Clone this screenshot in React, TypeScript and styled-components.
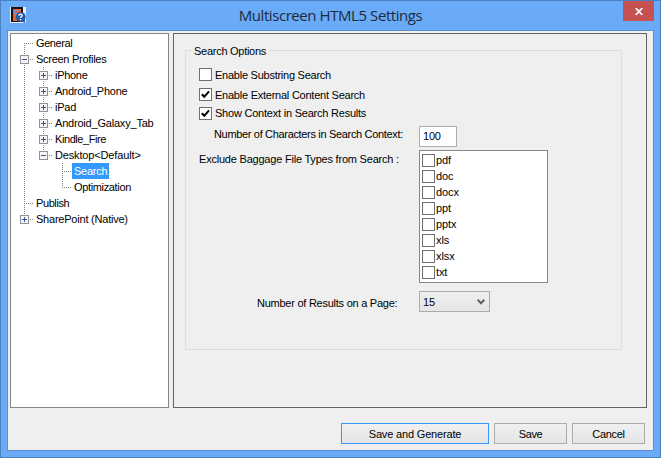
import React from "react";
import styled, { createGlobalStyle } from "styled-components";

const Global = createGlobalStyle`
  * { box-sizing: border-box; }
  html, body { margin: 0; padding: 0; overflow: hidden; }
  body, button, input { font-family: "Liberation Sans", Arial, sans-serif; font-size: 11px; color: #000; }
`;

const Window = styled.div`
  width: 661px;
  height: 458px;
  display: flex;
  flex-direction: column;
  padding: 0 6px 6px;
  background: #6aabf7;
  border: 1px solid #4c82bf;
`;

const TitleBar = styled.header`
  flex: 0 0 29px;
  display: grid;
  grid-template-columns: 31px 1fr 31px;
  align-items: start;
`;

const AppIcon = styled.svg`
  width: 16px;
  height: 16px;
  margin: 6px 0 0 3px;
`;

const Title = styled.h1`
  margin: 0;
  text-align: center;
  font: 400 15px/29px "Open Sans", sans-serif;
  color: #1c2a3c;
`;

const CloseButton = styled.button`
  display: flex;
  align-items: center;
  justify-content: center;
  width: 31px;
  height: 20px;
  padding: 1px 0 0 1px;
  border: 0;
  background: #c75050;
`;

const Client = styled.main`
  flex: 1;
  display: flex;
  flex-direction: column;
  padding: 2px 6px 6px 2px;
  background: #efefef;
  border: 1px solid #5a90cc;
`;

const Panes = styled.div`
  display: flex;
  gap: 4px;
  height: 375px;
`;

const Tree = styled.nav`
  width: 159px;
  padding: 1px 0;
  background: #fff;
  border: 1px solid #828790;
`;

const TreeRow = styled.div`
  display: flex;
  align-items: center;
  height: 16px;
`;

const Gutter = styled.svg`
  flex: none;
  display: block;
`;

const NodeName = styled.span<{ $selected?: boolean; $tracking: number }>`
  height: 16px;
  padding: 0 2px;
  line-height: 16px;
  white-space: nowrap;
  letter-spacing: ${(p) => p.$tracking}px;
  color: ${(p) => (p.$selected ? "#fff" : "#000")};
  background: ${(p) => (p.$selected ? "#3399ff" : "transparent")};
`;

const Panel = styled.section`
  flex: 1;
  padding: 10px 24px 0 11px;
  border: 1px solid #646464;
`;

const Group = styled.fieldset`
  margin: 0;
  padding: 0 0 0 13px;
  width: 437px;
  height: 306px;
  min-width: 0;
  border: 1px solid #dcdcdc;
`;

const Legend = styled.legend`
  margin-left: -7px;
  padding: 0 3px 0 2px;
  height: 13px;
  line-height: 15px;
`;

const Text = styled.span<{ $tracking: number }>`
  letter-spacing: ${(p) => p.$tracking}px;
  white-space: nowrap;
`;

const Option = styled.label<{ $gap: number; $drop: number }>`
  display: flex;
  align-items: center;
  gap: 3px;
  height: 13px;
  line-height: 13px;
  margin-top: ${(p) => p.$gap}px;

  ${Text} {
    padding-top: ${(p) => p.$drop * 2}px;
  }
`;

const Box = styled.span`
  flex: none;
  display: flex;
  align-items: center;
  justify-content: center;
  width: 13px;
  height: 13px;
  background: #fff;
  border: 1px solid #707070;
`;

const Field = styled.div<{ $gap: number; $indent: number }>`
  display: flex;
  align-items: flex-start;
  margin-top: ${(p) => p.$gap}px;
  padding-left: ${(p) => p.$indent}px;
`;

const FieldName = styled.span<{ $width: number; $drop: number }>`
  width: ${(p) => p.$width}px;
  padding-top: ${(p) => p.$drop}px;
  line-height: 15px;
`;

const NumberInput = styled.div`
  width: 38px;
  height: 21px;
  padding-left: 3px;
  line-height: 18px;
  background: #fff;
  border: 1px solid #abadb3;
`;

const FileList = styled.div`
  width: 129px;
  height: 133px;
  padding: 1px 2px;
  background: #fff;
  border: 1px solid #828790;
`;

const FileItem = styled.label`
  display: flex;
  align-items: center;
  gap: 1px;
  height: 16px;
  line-height: 16px;
`;

const Select = styled.div`
  display: flex;
  align-items: center;
  justify-content: space-between;
  width: 71px;
  height: 21px;
  padding: 0 4px 0 3px;
  background: linear-gradient(#f0f0f0, #e5e5e5);
  border: 1px solid #acacac;
`;

const Footer = styled.footer`
  display: flex;
  justify-content: flex-end;
  gap: 5px;
  margin-top: 15px;
  padding-right: 2px;
`;

const Button = styled.button<{ $width: number; $primary?: boolean }>`
  width: ${(p) => p.$width}px;
  height: 21px;
  padding: 0;
  outline: none;
  background: linear-gradient(#f0f0f0, #e5e5e5);
  border: 1px solid ${(p) => (p.$primary ? "#3399ff" : "#acacac")};
`;

interface TreeItem {
  name: string;
  depth: number;
  expander?: "+" | "-";
  /** Vertical connectors as [x, top, bottom] inside the 16px row. */
  lines: [number, number, number][];
  selected?: boolean;
  tracking: number;
}

const nodes: TreeItem[] = [
  { name: "General", depth: 0, lines: [[13, 8, 16]], tracking: -0.4 },
  { name: "Screen Profiles", depth: 0, expander: "-", lines: [[13, 0, 16]], tracking: -0.28 },
  { name: "iPhone", depth: 1, expander: "+", lines: [[13, 0, 16], [32, 0, 16]], tracking: -0.3 },
  { name: "Android_Phone", depth: 1, expander: "+", lines: [[13, 0, 16], [32, 0, 16]], tracking: -0.27 },
  { name: "iPad", depth: 1, expander: "+", lines: [[13, 0, 16], [32, 0, 16]], tracking: -0.25 },
  { name: "Android_Galaxy_Tab", depth: 1, expander: "+", lines: [[13, 0, 16], [32, 0, 16]], tracking: -0.2 },
  { name: "Kindle_Fire", depth: 1, expander: "+", lines: [[13, 0, 16], [32, 0, 16]], tracking: -0.42 },
  { name: "Desktop<Default>", depth: 1, expander: "-", lines: [[13, 0, 16], [32, 0, 8]], tracking: -0.15 },
  { name: "Search", depth: 2, lines: [[13, 0, 16], [51, 0, 16]], selected: true, tracking: -0.25 },
  { name: "Optimization", depth: 2, lines: [[13, 0, 16], [51, 0, 8]], tracking: -0.35 },
  { name: "Publish", depth: 0, lines: [[13, 0, 16]], tracking: -0.4 },
  { name: "SharePoint (Native)", depth: 0, expander: "+", lines: [[13, 0, 8]], tracking: -0.22 },
];

const fileTypes = ["pdf", "doc", "docx", "ppt", "pptx", "xls", "xlsx", "txt"];

function Connector({ item }: { item: TreeItem }) {
  const x = 13 + item.depth * 19;
  const width = x + 10;
  return (
    <Gutter width={width} height={16} shapeRendering="crispEdges" fill="none">
      {item.lines.map(([lx, a, b]) => (
        <path key={lx} d={`M${lx + 0.5} ${a}V${b}`} stroke="#808080" strokeDasharray="1 1" />
      ))}
      <path d={`M${x} 8.5H${width - 1}`} stroke="#808080" strokeDasharray="1 1" />
      {item.expander && (
        <>
          <rect x={x - 4} y={4} width={9} height={9} fill="#919191" />
          <rect x={x - 3} y={5} width={7} height={7} fill="#f6f6f6" />
          <path d={`M${x - 2} 8.5h5`} stroke="#3a5794" />
          {item.expander === "+" && <path d={`M${x + 0.5} 6v5`} stroke="#3a5794" />}
        </>
      )}
    </Gutter>
  );
}

function Tick() {
  return (
    <svg width="11" height="11" viewBox="0 0 11 11">
      <path d="M1.8 5.2L4.3 7.8L9 2.4" fill="none" stroke="#000" strokeWidth="2" />
    </svg>
  );
}

interface CheckProps {
  label: string;
  checked?: boolean;
  gap: number;
  drop?: number;
  tracking: number;
}

function Check({ label, checked, gap, drop = 0, tracking }: CheckProps) {
  return (
    <Option $gap={gap} $drop={drop}>
      <Box>{checked && <Tick />}</Box>
      <Text $tracking={tracking}>{label}</Text>
    </Option>
  );
}

export default function App() {
  return (
    <>
      <Global />
      <Window>
        <TitleBar>
          <AppIcon viewBox="0 0 16 16">
            <rect width="16" height="16" fill="#e8edf5" />
            <rect x="1" y="0" width="12" height="15" fill="#171313" />
            <rect x="3" y="2" width="8" height="12" fill="#e9602e" />
            <path d="M4 3.5h6M4.5 3v3.5h4M5 8.5h2" stroke="#6c9bd8" fill="none" />
            <circle cx="10.7" cy="10" r="5" fill="#2859a5" />
            <path d="M11 14l4 2v-4z" fill="#2859a5" />
            <path d="M9 8.7c0-2 3.2-2 3.2 0c0 1.1-1.6 1-1.6 2.2M10.6 11.9v1.3" stroke="#fff" strokeWidth="1.3" fill="none" />
          </AppIcon>
          <Title><Text $tracking={-0.43}>Multiscreen HTML5 Settings</Text></Title>
          <CloseButton aria-label="Close">
            <svg width="8" height="7" viewBox="0 0 8 7">
              <path d="M0.7 0L7.3 7M7.3 0L0.7 7" stroke="#fff" strokeWidth="1.7" />
            </svg>
          </CloseButton>
        </TitleBar>
        <Client>
          <Panes>
            <Tree>
              {nodes.map((n) => (
                <TreeRow key={n.name}>
                  <Connector item={n} />
                  <NodeName $selected={n.selected} $tracking={n.tracking}>{n.name}</NodeName>
                </TreeRow>
              ))}
            </Tree>
            <Panel>
              <Group>
                <Legend><Text $tracking={-0.27}>Search Options</Text></Legend>
                <Check label="Enable Substring Search" gap={11} drop={1} tracking={-0.25} />
                <Check label="Enable External Content Search" checked gap={7} drop={1} tracking={-0.24} />
                <Check label="Show Context in Search Results" checked gap={6} tracking={-0.22} />
                <Field $gap={6} $indent={15}>
                  <FieldName $width={205} $drop={1}><Text $tracking={-0.33}>Number of Characters in Search Context:</Text></FieldName>
                  <NumberInput><Text $tracking={-0.2}>100</Text></NumberInput>
                </Field>
                <Field $gap={3} $indent={0}>
                  <FieldName $width={220} $drop={2}><Text $tracking={-0.21}>Exclude Baggage File Types from Search :</Text></FieldName>
                  <FileList>
                    {fileTypes.map((t) => (
                      <FileItem key={t}><Box /><Text $tracking={-0.1}>{t}</Text></FileItem>
                    ))}
                  </FileList>
                </Field>
                <Field $gap={8} $indent={58}>
                  <FieldName $width={162} $drop={5}><Text $tracking={-0.25}>Number of Results on a Page:</Text></FieldName>
                  <Select>
                    <Text $tracking={-0.2}>15</Text>
                    <svg width="8" height="6" viewBox="0 0 8 6">
                      <path d="M0.7 0.8L4 4.2L7.3 0.8" fill="none" stroke="#606060" strokeWidth="2" />
                    </svg>
                  </Select>
                </Field>
              </Group>
            </Panel>
          </Panes>
          <Footer>
            <Button $width={148} $primary><Text $tracking={-0.17}>Save and Generate</Text></Button>
            <Button $width={73}><Text $tracking={-0.4}>Save</Text></Button>
            <Button $width={73}><Text $tracking={-0.3}>Cancel</Text></Button>
          </Footer>
        </Client>
      </Window>
    </>
  );
}
